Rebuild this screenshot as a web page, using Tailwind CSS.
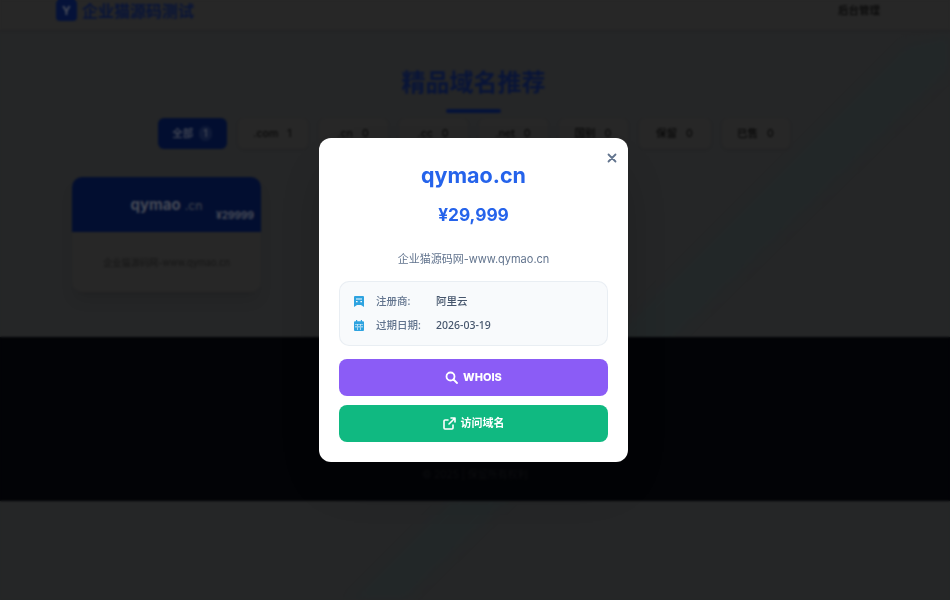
<!DOCTYPE html>
<html lang="zh-CN">

<head>
  <meta charset="UTF-8">
  <meta name="viewport" content="width=device-width, initial-scale=1.0">
  <title>企业猫源码测试</title>
  <script src="https://cdn.jsdelivr.net/npm/@tailwindcss/browser@4"></script>
</head>

<body class="h-[600px] overflow-hidden bg-[#4a4c4e] font-['Inter','Noto_Sans_CJK_SC',sans-serif] text-[#101010]">
  <!-- Background streak -->
  <svg class="fixed inset-0 -z-10 h-[600px] w-[950px] blur-[4px]" viewBox="0 0 950 600">
    <polygon points="950,35 905,45 350,600 405,600 950,70" fill="#3f5254" opacity="0.4" />
  </svg>

  <!-- Navigation -->
  <header class="h-[30px] bg-[#4e4e4e] shadow-sm">
    <div class="flex h-[21px] w-[947px] items-center justify-between pl-[56px] pr-[67px]">
      <a href="#" class="flex items-center gap-[5px]">
        <span class="flex h-[21px] w-[21px] items-center justify-center rounded-[4px] bg-[#0a2572] text-[12px] font-bold text-[#8d95ad]">Y</span>
        <span class="text-[16px] font-bold text-[#12296f]">企业猫源码测试</span>
      </a>
      <a href="#" class="text-[10.5px] font-medium">后台管理</a>
    </div>
  </header>

  <!-- Domains -->
  <main class="h-[307px] w-[947px] pt-[37px]">
    <h1 class="text-center text-[24px] font-bold leading-[32px] text-[#12296f]">精品域名推荐</h1>
    <div class="mx-auto mt-[10px] h-[4px] w-[55px] rounded-full bg-[#0a2572]"></div>

    <div class="mt-[5px] flex justify-center gap-[11px] text-[10.5px] font-medium">
      <button class="flex h-[31px] w-[69px] items-center justify-center gap-[6px] rounded-[6px] bg-[#051d60] text-[#8d95ad]">全部 <span class="rounded-full bg-white/10 px-[4px]">1</span></button>
      <button class="flex h-[31px] w-[70px] items-center justify-center gap-[9px] rounded-[6px] bg-[#4e4e4e] shadow-sm">.com <span>1</span></button>
      <button class="flex h-[31px] w-[69px] items-center justify-center gap-[9px] rounded-[6px] bg-[#4e4e4e] shadow-sm">.cn <span>0</span></button>
      <button class="flex h-[31px] w-[69px] items-center justify-center gap-[9px] rounded-[6px] bg-[#4e4e4e] shadow-sm">.cc <span>0</span></button>
      <button class="flex h-[31px] w-[69px] items-center justify-center gap-[9px] rounded-[6px] bg-[#4e4e4e] shadow-sm">.net <span>0</span></button>
      <button class="flex h-[31px] w-[69px] items-center justify-center gap-[9px] rounded-[6px] bg-[#4e4e4e] shadow-sm">国别 <span>0</span></button>
      <button class="flex h-[31px] w-[72px] items-center justify-center gap-[9px] rounded-[6px] bg-[#4e4e4e] shadow-sm">保留 <span>0</span></button>
      <button class="flex h-[31px] w-[68px] items-center justify-center gap-[9px] rounded-[6px] bg-[#4e4e4e] shadow-sm">已售 <span>0</span></button>
    </div>

    <div class="ml-[72px] mt-[28px] w-[189px] overflow-hidden rounded-[10px] bg-[#4e4e4e] shadow-lg">
      <div class="relative flex h-[55px] items-center justify-center bg-[#051d60] pt-[1px] font-bold text-[#8d95ad]">
        <span class="text-[15px]">qymao</span><span class="ml-[4px] mt-[2px] text-[12px] font-medium text-[#6f7890]">.cn</span>
        <span class="absolute bottom-[9px] right-[7px] text-[10px]">¥29999</span>
      </div>
      <p class="flex h-[60px] items-center justify-center pt-[2px] text-[9.2px] text-[#2b2b2b]">企业猫源码网-www.qymao.cn</p>
    </div>
  </main>

  <!-- Footer -->
  <footer class="flex h-[164px] w-full items-end justify-center bg-[#04060c] pb-[19px]">
    <p class="w-[947px] text-center text-[10px] text-[#1c1e24]">© 2025 | 保留所有权利</p>
  </footer>

  <!-- Detail modal -->
  <div class="fixed inset-0 flex items-center justify-center bg-black/50 pb-[1px] pr-[3px] backdrop-blur-[1px]">
    <div class="relative w-[309px] rounded-[12px] bg-white px-[20px] pb-[20px] pt-[21px] shadow-2xl">
      <button class="absolute right-[9px] top-[13px] text-slate-500">
        <svg class="h-[14px] w-[14px]" viewBox="0 0 14 14" fill="none" stroke="currentColor" stroke-width="1.8" stroke-linecap="round"><path d="M3.5 3.5l7 7M10.5 3.5l-7 7" /></svg>
      </button>
      <h2 class="text-center text-[21.5px] font-bold leading-[32px] text-[#2563eb]">qymao.cn</h2>
      <p class="mt-[10px] text-center text-[17.3px] font-bold leading-[28px] text-[#2563eb]">¥29,999</p>
      <p class="mt-[21px] text-center text-[11px] leading-[18px] text-slate-500">企业猫源码网-www.qymao.cn</p>

      <div class="mt-[13px] flex h-[65px] flex-col justify-center gap-[8px] rounded-[10px] border border-slate-200/70 bg-slate-50 px-[14px] pt-[1px] font-['Noto_Sans','Noto_Sans_CJK_SC',sans-serif] text-[10.5px] font-medium">
        <div class="flex h-[16px] items-center">
          <svg class="h-[11px] w-[10px] text-[#2ea3e0]" viewBox="0 0 10 11" fill="currentColor"><path d="M1 0h8a1 1 0 0 1 1 1v10L7 9H3l-3 2V1a1 1 0 0 1 1-1zm1 2.5v1h6v-1zm0 2.5v1.2h1.6V5zm4.4 0v1.2H8V5z" fill-rule="evenodd" /></svg>
          <span class="ml-[12px] w-[60px] text-slate-500">注册商:</span>
          <span class="text-slate-600">阿里云</span>
        </div>
        <div class="flex h-[16px] items-center">
          <svg class="h-[11px] w-[10px] text-[#2ea3e0]" viewBox="0 0 10 11" fill="currentColor"><path d="M2 0h1.2v1.2h3.6V0H8v1.2h1a1 1 0 0 1 1 1V10a1 1 0 0 1-1 1H1a1 1 0 0 1-1-1V2.2a1 1 0 0 1 1-1h1zM1 4v.6h8V4zm0 2.6v.6h8v-.6zm2.2-2v5.4h.6V4.6zm3 0v5.4h.6V4.6z" fill-rule="evenodd" /></svg>
          <span class="ml-[12px] w-[60px] text-slate-500">过期日期:</span>
          <span class="text-slate-600">2026-03-19</span>
        </div>
      </div>

      <a href="#" class="mt-[13px] flex h-[37px] items-center justify-center gap-[5px] rounded-[8px] bg-[#8b5cf6] text-[11px] font-extrabold text-white">
        <svg class="h-[13px] w-[13px]" viewBox="0 0 13 13" fill="none" stroke="currentColor" stroke-width="1.8" stroke-linecap="round"><circle cx="5.5" cy="5.5" r="4" /><path d="M8.5 8.5l3.5 3.5" /></svg>
        WHOIS
      </a>
      <a href="#" class="mt-[9px] flex h-[37px] items-center justify-center gap-[5px] rounded-[8px] bg-[#10b981] text-[11px] font-bold text-white">
        <svg class="h-[13px] w-[13px]" viewBox="0 0 13 13" fill="none" stroke="currentColor" stroke-width="1.6" stroke-linecap="round" stroke-linejoin="round"><path d="M10 8v3a1 1 0 0 1-1 1H2a1 1 0 0 1-1-1V4a1 1 0 0 1 1-1h3M8 1h4v4M12 1L6 7" /></svg>
        访问域名
      </a>
    </div>
  </div>
</body>

</html>
